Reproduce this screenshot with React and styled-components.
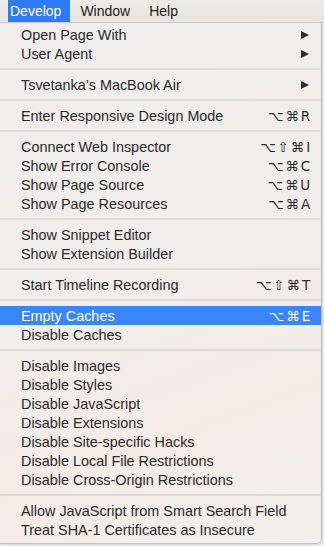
import styled, { createGlobalStyle } from 'styled-components';

const GlobalStyle = createGlobalStyle`
  html, body {
    margin: 0;
    padding: 0;
    background: #f3f1ee;
  }
  body {
    font-family: "Liberation Sans", Arial, sans-serif;
    -webkit-font-smoothing: antialiased;
  }
`;

const sections = [
  [
    { label: 'Open Page With', submenu: true },
    { label: 'User Agent', submenu: true },
  ],
  [{ label: 'Tsvetanka’s MacBook Air', submenu: true }],
  [{ label: 'Enter Responsive Design Mode', keys: '⌥⌘R' }],
  [
    { label: 'Connect Web Inspector', keys: '⌥⇧⌘I' },
    { label: 'Show Error Console', keys: '⌥⌘C' },
    { label: 'Show Page Source', keys: '⌥⌘U' },
    { label: 'Show Page Resources', keys: '⌥⌘A' },
  ],
  [{ label: 'Show Snippet Editor' }, { label: 'Show Extension Builder' }],
  [{ label: 'Start Timeline Recording', keys: '⌥⇧⌘T' }],
  [
    { label: 'Empty Caches', keys: '⌥⌘E', active: true },
    { label: 'Disable Caches' },
  ],
  [
    { label: 'Disable Images' },
    { label: 'Disable Styles' },
    { label: 'Disable JavaScript' },
    { label: 'Disable Extensions' },
    { label: 'Disable Site-specific Hacks' },
    { label: 'Disable Local File Restrictions' },
    { label: 'Disable Cross-Origin Restrictions' },
  ],
  [
    { label: 'Allow JavaScript from Smart Search Field' },
    { label: 'Treat SHA-1 Certificates as Insecure' },
  ],
];

export default function App() {
  return (
    <>
      <GlobalStyle />
      <Screen>
        <MenuBar>
          <BarItem $open>Develop</BarItem>
          <BarItem>Window</BarItem>
          <BarItem>Help</BarItem>
        </MenuBar>
        <Menu>
          {sections.map((items, i) => (
            <Section key={i}>
              {i > 0 && <Separator />}
              {items.map((item) => (
                <Item key={item.label} $active={item.active}>
                  <Label>{item.label}</Label>
                  {item.keys && <Keys>{item.keys.split('').join(' ')}</Keys>}
                  {item.submenu && (
                    <Arrow viewBox="0 0 8 8">
                      <path d="M0 0 L8 4 L0 8 Z" fill="currentColor" />
                    </Arrow>
                  )}
                </Item>
              ))}
            </Section>
          ))}
        </Menu>
      </Screen>
    </>
  );
}

const Screen = styled.div`
  width: 324px;
  height: 546px;
  overflow: hidden;
  display: flex;
  flex-direction: column;
`;

const MenuBar = styled.div`
  flex-shrink: 0;
  height: 22px;
  display: flex;
  align-items: stretch;
  padding-left: 8px;
  background: linear-gradient(#ecebe3, #e7e5dd);
  border-bottom: 1px solid #cbc9c4;
`;

const BarItem = styled.div`
  display: flex;
  align-items: center;
  padding: ${(p) => (p.$open ? '0 9px 0 2px' : '0')};
  margin-right: ${(p) => (p.$open ? '10px' : '19px')};
  font-size: 14px;
  color: ${(p) => (p.$open ? '#ffffff' : '#222222')};
  background: ${(p) => (p.$open ? '#2f7af5' : 'transparent')};
`;

const Menu = styled.div`
  flex-shrink: 0;
  width: 321px;
  padding: 2px 0 4px;
  background: linear-gradient(160deg, #efeeec 0%, #f0edea 45%, #f4ebe4 75%, #f1efed 100%);
  border-right: 1px solid #bdbbb8;
  border-bottom: 1px solid #c6c4c1;
  border-bottom-right-radius: 5px;
  box-shadow: 1px 1px 2px rgba(0, 0, 0, 0.12);
`;

const Section = styled.div`
  display: flex;
  flex-direction: column;
`;

const Separator = styled.div`
  height: 2px;
  margin: 5px 0;
  background: #dcdad7;
`;

const Item = styled.div`
  height: 19px;
  display: flex;
  align-items: center;
  padding: 0 12px 0 21px;
  font-size: 14.4px;
  color: ${(p) => (p.$active ? '#ffffff' : '#2a2a2a')};
  background: ${(p) => (p.$active ? '#3a86f6' : 'transparent')};
`;

const Label = styled.span`
  flex: 1;
  white-space: nowrap;
`;

const Keys = styled.span`
  font-family: "DejaVu Sans", "Liberation Sans", sans-serif;
  font-size: 13.5px;
  white-space: pre;
  letter-spacing: -1.2px;
`;

const Arrow = styled.svg`
  width: 8px;
  height: 8px;
  color: #2a2a2a;
`;
